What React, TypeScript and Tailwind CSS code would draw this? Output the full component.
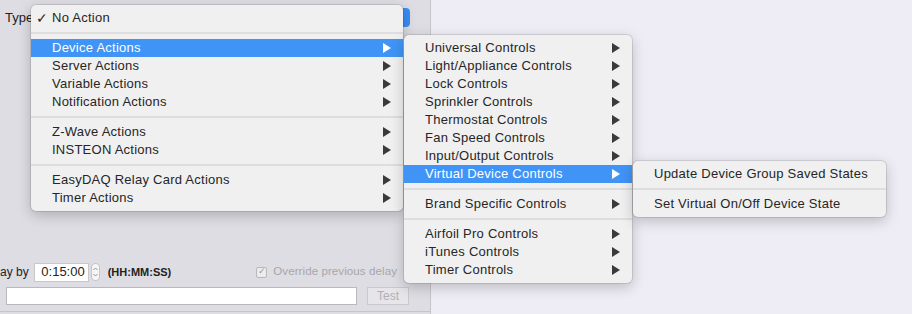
type Item =
  | { sep: true }
  | { label: string; arrow?: boolean; active?: boolean; check?: boolean };

const mainItems: Item[] = [
  { label: "No Action", check: true },
  { sep: true },
  { label: "Device Actions", arrow: true, active: true },
  { label: "Server Actions", arrow: true },
  { label: "Variable Actions", arrow: true },
  { label: "Notification Actions", arrow: true },
  { sep: true },
  { label: "Z-Wave Actions", arrow: true },
  { label: "INSTEON Actions", arrow: true },
  { sep: true },
  { label: "EasyDAQ Relay Card Actions", arrow: true },
  { label: "Timer Actions", arrow: true },
];

const deviceItems: Item[] = [
  { label: "Universal Controls", arrow: true },
  { label: "Light/Appliance Controls", arrow: true },
  { label: "Lock Controls", arrow: true },
  { label: "Sprinkler Controls", arrow: true },
  { label: "Thermostat Controls", arrow: true },
  { label: "Fan Speed Controls", arrow: true },
  { label: "Input/Output Controls", arrow: true },
  { label: "Virtual Device Controls", arrow: true, active: true },
  { sep: true },
  { label: "Brand Specific Controls", arrow: true },
  { sep: true },
  { label: "Airfoil Pro Controls", arrow: true },
  { label: "iTunes Controls", arrow: true },
  { label: "Timer Controls", arrow: true },
];

const virtualItems: Item[] = [
  { label: "Update Device Group Saved States" },
  { sep: true },
  { label: "Set Virtual On/Off Device State" },
];

function Arrow({ light }: { light?: boolean }) {
  return (
    <svg width="8" height="10" viewBox="0 0 8 10" className="shrink-0">
      <polygon points="0,0 8,5 0,10" fill={light ? "#ffffff" : "#3a3a3a"} />
    </svg>
  );
}

function MenuRows({ items }: { items: Item[] }) {
  return (
    <>
      {items.map((item, i) => {
        if ("sep" in item) {
          return (
            <div key={i} className="h-[12px] flex items-center">
              <div className="h-[2px] w-full bg-[#dedede]" />
            </div>
          );
        }
        return (
          <div
            key={i}
            className={`h-[18px] flex items-center pl-[5px] pr-[12px] ${
              item.active ? "bg-[#4094f6] text-white" : "text-[#262626]"
            }`}
          >
            <span className="w-[16px] text-[14px] leading-none">{item.check ? "✓" : ""}</span>
            <span className="flex-1 text-[13px] tracking-[0.25px] whitespace-nowrap">{item.label}</span>
            {item.arrow && <Arrow light={item.active} />}
          </div>
        );
      })}
    </>
  );
}

export default function App() {
  return (
    <div
      className="relative w-[912px] h-[314px] overflow-hidden flex bg-[#eeedf5]"
      style={{ fontFamily: '"Liberation Sans", Arial, sans-serif' }}
    >
      {/* window behind the menus */}
      <div className="w-[431px] h-full flex flex-col bg-[#dedde3] border-r border-[#c6c5cb] overflow-hidden">
        <div className="mt-[8px] h-[19px] flex items-center">
          <span className="pl-[5px] text-[13px] text-[#222]">Type:</span>
          <div className="ml-auto mr-[20px] w-[360px] h-[19px] rounded-[4px] bg-white flex justify-end">
            <div className="w-[18px] h-full rounded-r-[4px] bg-[#3b8cf5] flex items-center justify-center text-white text-[9px]">
              ⇕
            </div>
          </div>
        </div>
        <div className="flex-1" />
        <div className="h-[18px] flex items-center text-[12px] text-[#222]">
          <span>ay by</span>
          <div className="ml-[5px] w-[55px] h-[19px] bg-white border border-[#c8c8c8] flex items-center justify-end pr-[3px] text-[13px]">
            0:15:00
          </div>
          <div className="ml-[2px] w-[9px] h-[18px] rounded-[4px] bg-[#f6f6f6] border border-[#c4c4c4] flex items-center justify-center">
            <svg width="5" height="12" viewBox="0 0 5 12">
              <polyline points="0.5,4 2.5,2 4.5,4" fill="none" stroke="#8a8a8a" strokeWidth="0.9" />
              <polyline points="0.5,8 2.5,10 4.5,8" fill="none" stroke="#8a8a8a" strokeWidth="0.9" />
            </svg>
          </div>
          <span className="ml-[8px] text-[11px] font-semibold text-[#222]">(HH:MM:SS)</span>
          <div className="ml-auto w-[11px] h-[11px] rounded-[2px] border border-[#b8b8b8] bg-[#ececec] flex items-center justify-center text-[9px] text-[#999]">
            ✓
          </div>
          <span className="ml-[6px] mr-[33px] text-[11.5px] tracking-[0.1px] text-[#a7a6ab]">
            Override previous delay
          </span>
        </div>
        <div className="mt-[6px] h-[18px] flex items-center">
          <div className="ml-[6px] w-[351px] h-[18px] bg-white border border-[#b9b9b9]" />
          <div className="ml-[10px] w-[42px] h-[18px] border border-[#c9c9cc] bg-[#e6e5ea] flex items-center justify-center text-[12px] text-[#b1b0b5]">
            Test
          </div>
        </div>
        <div className="mt-[6px] h-px bg-[#c6c5cb]" />
        <div className="h-[2px]" />
      </div>
      <div className="flex-1" />

      {/* main popup menu */}
      <div className="absolute left-[31px] top-[5px] w-[372px] py-[4px] rounded-[5px] bg-[#f0f0f0] shadow-[0_4px_14px_rgba(0,0,0,0.22)] ring-1 ring-black/10">
        <MenuRows items={mainItems} />
      </div>

      {/* Device Actions submenu */}
      <div className="absolute left-[404px] top-[35px] w-[228px] py-[4px] rounded-[5px] bg-[#f0f0f0] shadow-[0_4px_14px_rgba(0,0,0,0.22)] ring-1 ring-black/10">
        <MenuRows items={deviceItems} />
      </div>

      {/* Virtual Device Controls submenu */}
      <div className="absolute left-[633px] top-[161px] w-[253px] py-[4px] rounded-[5px] bg-[#f0f0f0] shadow-[0_4px_14px_rgba(0,0,0,0.22)] ring-1 ring-black/10">
        <MenuRows items={virtualItems} />
      </div>
    </div>
  );
}
